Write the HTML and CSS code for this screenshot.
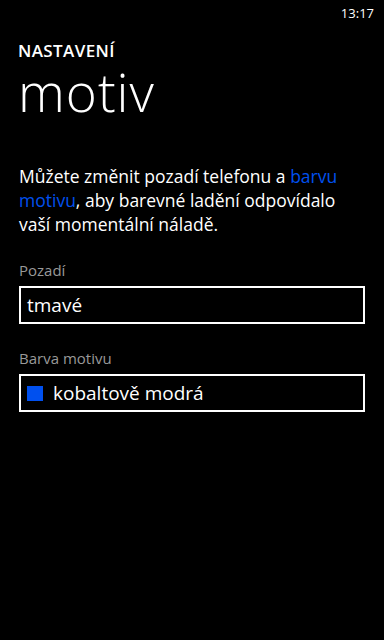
FILE: index.html
```html
<!DOCTYPE html>
<html lang="cs">
<head>
<meta charset="utf-8">
<title>motiv</title>
<link rel="stylesheet" href="styles.css">
</head>
<body>
<div class="phone">
  <div class="status"><span class="time">13:17</span></div>
  <header class="header">
    <div class="app-title">NASTAVENÍ</div>
    <h1 class="page-title">motiv</h1>
  </header>
  <main class="content">
    <p class="intro">Můžete změnit pozadí telefonu a <span class="accent">barvu motivu</span>, aby barevné ladění odpovídalo vaší momentální náladě.</p>
    <div class="field">
      <div class="label">Pozadí</div>
      <div class="picker"><span class="value">tmavé</span></div>
    </div>
    <div class="field">
      <div class="label">Barva motivu</div>
      <div class="picker"><span class="swatch"></span><span class="value">kobaltově modrá</span></div>
    </div>
  </main>
</div>
</body>
</html>
```
FILE: styles.css
```css
html, body {
  margin: 0;
  padding: 0;
  background: #000;
}
body {
  font-family: "Open Sans", "Noto Sans", sans-serif;
  color: #fff;
}
.phone {
  width: 384px;
  height: 640px;
  background: #000;
  overflow: hidden;
}
.status {
  height: 26px;
  display: flex;
  justify-content: flex-end;
  padding-right: 10px;
}
.time {
  font-size: 13px;
  line-height: 26px;
}
.header {
  padding: 15px 19px 0 18px;
}
.app-title {
  font-size: 17px;
  line-height: 20px;
  font-weight: 600;
  letter-spacing: 0.4px;
}
.page-title {
  margin: 3px 0 0 0;
  font-size: 53px;
  line-height: 56px;
  font-weight: 300;
  letter-spacing: 1px;
}
.content {
  padding: 0 19px;
}
.intro {
  margin: 44px 0 0 0;
  max-width: 336px;
  font-size: 17.5px;
  line-height: 24px;
}
.accent {
  color: #0050ef;
}
.field {
  margin-top: 24px;
}
.label {
  font-size: 15px;
  line-height: 20px;
  color: #999;
}
.picker {
  margin-top: 6px;
  height: 34px;
  border: 2px solid #fff;
  display: flex;
  align-items: center;
  padding-left: 6px;
}
.value {
  font-size: 19px;
  line-height: 34px;
}
.swatch {
  width: 16px;
  height: 15px;
  background: #0050ef;
  margin-right: 10px;
}
```
